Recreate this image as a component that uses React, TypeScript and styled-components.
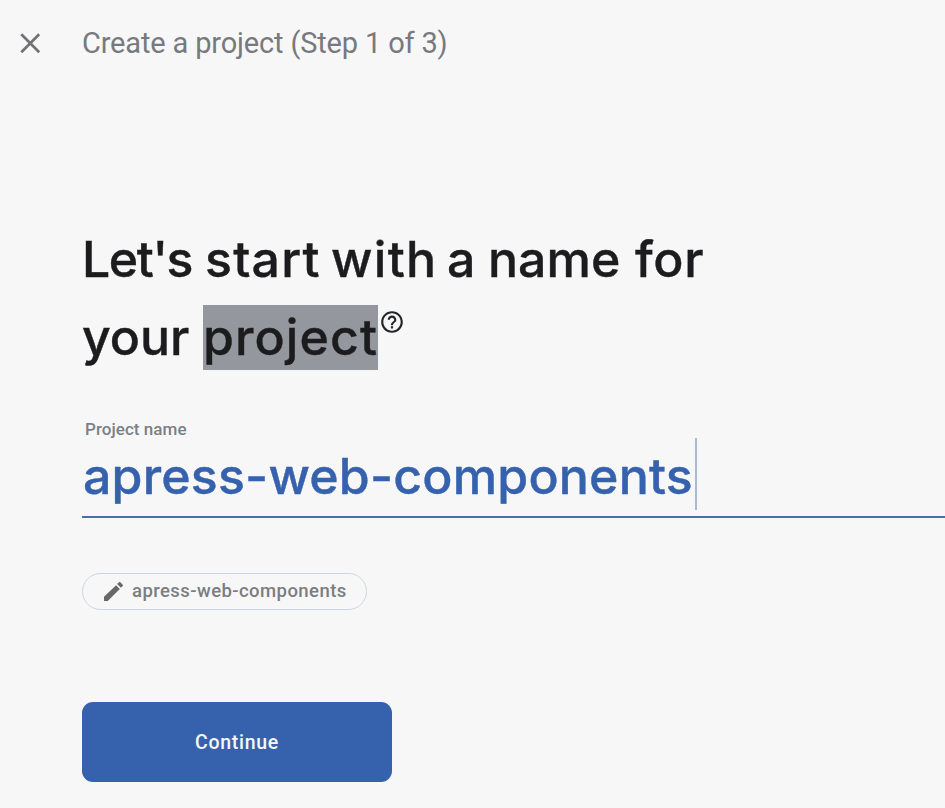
import React from 'react';
import styled, { createGlobalStyle } from 'styled-components';

const GlobalStyle = createGlobalStyle`
  *, *::before, *::after { box-sizing: border-box; }
  body { margin: 0; background: #f7f7f7; overflow: hidden; font-family: Roboto, sans-serif; }
`;

const Page = styled.main`
  height: 808px;
  overflow: hidden;
  background: #f7f7f7;
`;

const Header = styled.header`
  display: flex;
  align-items: center;
  height: 88px;
  padding-left: 20px;
`;

const CloseButton = styled.button`
  display: flex;
  width: 21px;
  padding: 0;
  margin: -2px 41px 0 0;
  border: 0;
  background: none;
`;

const Step = styled.span`
  margin-top: -2px;
  font-size: 29px;
  line-height: 36px;
  letter-spacing: -0.16px;
  color: #77797e;
  white-space: nowrap;
`;

const Content = styled.section`
  display: flex;
  flex-direction: column;
  align-items: flex-start;
  padding: 132px 0 0 82px;
`;

const Title = styled.h1`
  margin: 0;
  font: 500 50px/78px Inter, sans-serif;
  -webkit-text-stroke: 0.4px currentColor;
  color: #1c1c1e;
  white-space: nowrap;
`;

const TitleLine = styled.span`
  display: flex;
  height: 78px;
`;

const Word = styled.span<{ $width: number; $spacing?: number }>`
  width: ${(p) => p.$width}px;
  letter-spacing: ${(p) => p.$spacing ?? 0}px;
`;

const Selected = styled.mark`
  width: 175px;
  height: 65px;
  margin-top: 7px;
  background: #95979e;
  color: inherit;
  line-height: 64px;
  letter-spacing: 1.1px;
`;

const HelpIcon = styled.svg`
  margin: 11px 0 0 1px;
`;

const Field = styled.div`
  display: flex;
  flex-direction: column;
  align-self: stretch;
  height: 99px;
  margin-top: 43px;
  border-bottom: 2px solid #4b6eaa;
`;

const Label = styled.label`
  margin-left: 3px;
  font: 500 17px/20px Roboto, sans-serif;
  letter-spacing: 0.05px;
  color: #7c7f86;
`;

const Value = styled.div`
  align-self: flex-start;
  width: 615px;
  height: 72px;
  margin-top: -1px;
  padding-left: 1px;
  border-right: 2px solid #a9b9d6;
  font: 500 50px/76px Inter, sans-serif;
  -webkit-text-stroke: 0.4px currentColor;
  letter-spacing: 0.2px;
  color: #3662ad;
  white-space: nowrap;
`;

const Chip = styled.button`
  display: flex;
  align-items: center;
  width: 285px;
  height: 37px;
  margin-top: 55px;
  padding: 0 0 1px 19px;
  gap: 6px;
  border: 1px solid #cdd5e2;
  border-radius: 19px;
  background: transparent;
  font: 500 18.5px/24px Roboto, sans-serif;
  letter-spacing: 0.43px;
  color: #7b7d82;
  white-space: nowrap;
`;

const Continue = styled.button`
  width: 310px;
  height: 80px;
  margin-top: 92px;
  padding-top: 3px;
  border: 0;
  border-radius: 11px;
  background: #3662ad;
  color: #f7f7f7;
  font: 500 19.5px/24px Roboto, sans-serif;
  letter-spacing: 0.7px;
`;

export default function App() {
  return (
    <Page>
      <GlobalStyle />
      <Header>
        <CloseButton aria-label="Close">
          <svg width="21" height="21" viewBox="0 0 21 21" fill="none" stroke="#717277" strokeWidth="2.7">
            <path d="M1.3 1.3 19.2 19.2M19.2 1.3 1.3 19.2" />
          </svg>
        </CloseButton>
        <Step>Create a project (Step 1 of 3)</Step>
      </Header>
      <Content>
        <Title>
          <TitleLine>
            <Word $width={123} $spacing={-1.4}>Let's</Word>
            <Word $width={126} $spacing={1.2}>start</Word>
            <Word $width={116} $spacing={1.3}>with</Word>
            <Word $width={41}>a</Word>
            <Word $width={147}>name</Word>
            <Word $width={70} $spacing={0.7}>for</Word>
          </TitleLine>
          <TitleLine>
            <Word $width={121}>your</Word>
            <Selected>project</Selected>
            <HelpIcon width="26" height="26" viewBox="0 0 24 24" fill="#242528">
              <path d="M11 18h2v-2h-2v2zm1-16C6.48 2 2 6.48 2 12s4.48 10 10 10 10-4.48 10-10S17.52 2 12 2zm0 18c-4.41 0-8-3.59-8-8s3.59-8 8-8 8 3.59 8 8-3.59 8-8 8zm0-14c-2.21 0-4 1.79-4 4h2c0-1.1.9-2 2-2s2 .9 2 2c0 2-3 1.75-3 5h2c0-2.25 3-2.5 3-5 0-2.21-1.79-4-4-4z" />
            </HelpIcon>
          </TitleLine>
        </Title>
        <Field>
          <Label>Project name</Label>
          <Value>apress-web-components</Value>
        </Field>
        <Chip>
          <svg width="24" height="24" viewBox="0 0 24 24" fill="#66686b">
            <path d="M2 17.8V22h3.75L17.81 9.94l-3.75-3.75L2 17.8zM20.71 7.04a1 1 0 0 0 0-1.41l-2.34-2.34a1 1 0 0 0-1.41 0l-1.83 1.83 3.75 3.75 1.83-1.83z" />
          </svg>
          apress-web-components
        </Chip>
        <Continue>Continue</Continue>
      </Content>
    </Page>
  );
}
